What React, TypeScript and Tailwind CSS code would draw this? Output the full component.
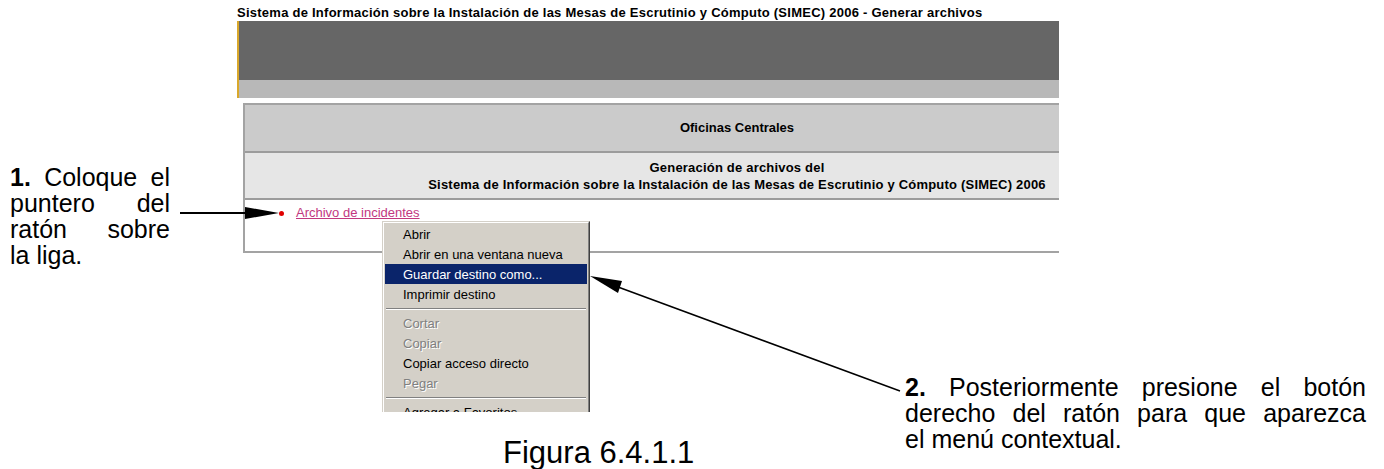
type MenuItem = { label?: string; active?: boolean; disabled?: boolean; sep?: boolean };

const menuItems: MenuItem[] = [
  { label: 'Abrir' },
  { label: 'Abrir en una ventana nueva' },
  { label: 'Guardar destino como...', active: true },
  { label: 'Imprimir destino' },
  { sep: true },
  { label: 'Cortar', disabled: true },
  { label: 'Copiar', disabled: true },
  { label: 'Copiar acceso directo' },
  { label: 'Pegar', disabled: true },
  { sep: true },
  { label: 'Agregar a Favoritos...' },
];

function ContextMenu() {
  return (
    <div className="absolute left-[145px] top-[221px] w-[208px] h-[191px] overflow-hidden">
      <div className="border border-t-[#d4d0c8] border-l-[#d4d0c8] border-r-[#404040] border-b-[#404040] bg-[#d4d0c8]">
        <div className="border border-t-white border-l-white border-r-[#808080] border-b-[#808080] p-px">
          {menuItems.map((item, i) =>
            item.sep ? (
              <div key={i} className="h-[9px] flex flex-col justify-center px-px">
                <div className="border-t border-[#808080]" />
                <div className="border-t border-white" />
              </div>
            ) : (
              <div
                key={i}
                className={
                  'h-[20px] flex items-center pl-[18px] text-[13px] leading-none whitespace-nowrap ' +
                  (item.active
                    ? 'bg-[#0a246a] text-white'
                    : item.disabled
                    ? 'text-[#808080] [text-shadow:1px_1px_0_#ffffff]'
                    : 'text-black')
                }
              >
                {item.label}
              </div>
            )
          )}
        </div>
      </div>
    </div>
  );
}

function Screenshot() {
  return (
    <div className="relative ml-[67px] w-[822px]">
      <div className="h-[21px] pt-[6px] text-[13px] leading-[13px] font-bold tracking-[0.25px] whitespace-nowrap">
        Sistema de Información sobre la Instalación de las Mesas de Escrutinio y Cómputo (SIMEC) 2006 - Generar archivos
      </div>
      <div className="h-[59px] bg-[#666666] border-l-2 border-[#d9a82b]" />
      <div className="h-[18px] bg-[#b8b8b8] border-l-2 border-[#d9a82b]" />
      <div className="h-[5px]" />
      <div className="ml-[6px] w-[816px] overflow-hidden">
        <div className="w-[988px] border-2 border-[#a3a3a3] text-[13px] font-bold">
          <div className="h-[48px] flex items-center justify-center bg-[#cbcbcb] border-b-2 border-[#9c9c9c]">
            Oficinas Centrales
          </div>
          <div className="h-[47px] flex flex-col items-center justify-center bg-[#e6e6e6] border-b-2 border-[#9c9c9c] leading-[17px] tracking-[0.2px]">
            <div>Generación de archivos del</div>
            <div>Sistema de Información sobre la Instalación de las Mesas de Escrutinio y Cómputo (SIMEC) 2006</div>
          </div>
          <div className="h-[51px] bg-white pt-[5px] font-normal">
            <div className="flex items-center h-[16px]">
              <span className="ml-[34px] w-[5px] h-[5px] rounded-full bg-[#e00000]" />
              <span className="ml-[12px] text-[#c2377f] underline">Archivo de incidentes</span>
            </div>
          </div>
        </div>
      </div>
      <ContextMenu />
    </div>
  );
}

const lineJ = 'text-justify [text-align-last:justify]';

export default function App() {
  return (
    <div className="relative w-[1384px] h-[469px] overflow-hidden bg-white text-black font-['Liberation_Sans',Arial,sans-serif]">
      <div className="flex items-start">
        <div className="ml-[10px] mt-[164px] w-[160px] text-[25px] leading-[26px]">
          <div className={lineJ}>
            <b>1.</b> Coloque el
          </div>
          <div className={lineJ}>puntero del</div>
          <div className={lineJ}>ratón sobre</div>
          <div>la liga.</div>
        </div>
        <Screenshot />
      </div>

      <div className="flex items-start">
        <div className="ml-[503px] mt-[169px] text-[31px] leading-[31px] whitespace-nowrap">Figura 6.4.1.1</div>
        <div className="ml-auto mr-[18px] mt-[106px] w-[461px] text-[25px] leading-[26px]">
          <div className={lineJ}>
            <b>2.</b> Posteriormente presione el botón
          </div>
          <div className={lineJ}>derecho del ratón para que aparezca</div>
          <div>el menú contextual.</div>
        </div>
      </div>

      <svg className="absolute inset-0 pointer-events-none" width="1384" height="469">
        <line x1="180" y1="213" x2="250" y2="213" stroke="#000" strokeWidth="2" />
        <polygon points="245,207 279,213 245,219" fill="#000" />
        <line x1="618" y1="287" x2="900" y2="391" stroke="#000" strokeWidth="1.5" />
        <polygon points="590,276 618,293 622,281" fill="#000" />
      </svg>
    </div>
  );
}
